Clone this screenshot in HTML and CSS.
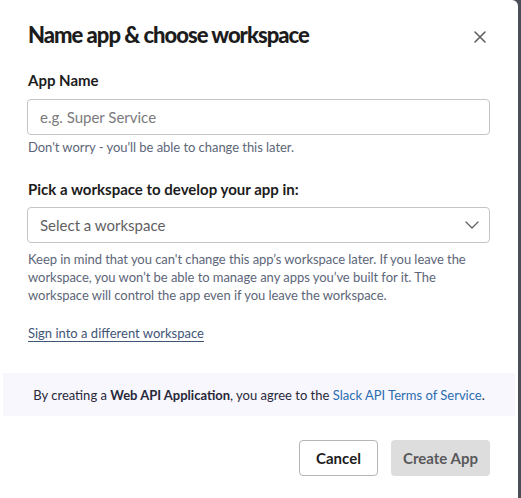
FILE: index.html
```html
<!DOCTYPE html>
<html lang="en">
<head>
<meta charset="utf-8">
<title>Name app &amp; choose workspace</title>
<link rel="stylesheet" href="styles.css">
</head>
<body>
<div class="modal">
  <div class="header">
    <h1 class="title">Name app &amp; choose workspace</h1>
    <button class="close" aria-label="Close">
      <svg width="12" height="12" viewBox="0 0 12 12"><path d="M1 1L11 11M11 1L1 11" stroke="#616061" stroke-width="1.6" stroke-linecap="round"/></svg>
    </button>
  </div>
  <div class="body">
    <label class="label">App Name</label>
    <div class="input placeholder">e.g. Super Service</div>
    <p class="hint">Don't worry - you'll be able to change this later.</p>

    <label class="label label-2">Pick a workspace to develop your app in:</label>
    <div class="input select">
      <span>Select a workspace</span>
      <svg width="14" height="8" viewBox="0 0 14 8"><path d="M1 1L7 7L13 1" fill="none" stroke="#616061" stroke-width="1.3" stroke-linecap="round" stroke-linejoin="round"/></svg>
    </div>
    <p class="hint para">Keep in mind that you can't change this app’s workspace later. If you leave the workspace, you won’t be able to manage any apps you’ve built for it. The workspace will control the app even if you leave the workspace.</p>

    <a class="signin" href="#">Sign into a different workspace</a>
  </div>
  <div class="terms">
    <span>By creating a <b>Web API Application</b>, you agree to the <a href="#">Slack API Terms of Service</a>.</span>
  </div>
  <div class="footer">
    <button class="btn btn-cancel">Cancel</button>
    <button class="btn btn-create">Create App</button>
  </div>
</div>
</body>
</html>
```
FILE: styles.css
```css
html, body {
  margin: 0;
  padding: 0;
  height: 100%;
}
body {
  background: #4b4e56;
  font-family: Lato, "Noto Sans", sans-serif;
  color: #1d1c1d;
  overflow: hidden;
}
.modal {
  width: 518px;
  height: 498px;
  background: #fff;
  border-top-right-radius: 6px;
  box-sizing: border-box;
  display: flex;
  flex-direction: column;
}
.header {
  display: flex;
  justify-content: space-between;
  align-items: center;
  padding: 20px 32px 0 28px;
}
.title {
  margin: 0;
  font-size: 22px;
  font-weight: 900;
  letter-spacing: -1px;
  line-height: 30px;
}
.close {
  border: 0;
  background: none;
  padding: 0;
  width: 12px;
  height: 12px;
  display: flex;
  margin-top: 4px;
}
.body {
  padding: 0 28px 0 27px;
  display: flex;
  flex-direction: column;
}
.label {
  display: block;
  font-size: 15px;
  font-weight: 700;
  line-height: 20px;
  margin-top: 20px;
  margin-bottom: 9px;
  padding-left: 1px;
}
.label-2 {
  margin-top: 23px;
  margin-bottom: 8px;
}
.input {
  height: 36px;
  box-sizing: border-box;
  border: 1px solid #c4c4c6;
  border-radius: 4px;
  padding: 0 12px;
  display: flex;
  align-items: center;
  font-size: 15px;
  color: #7a7a7c;
}
.select {
  justify-content: space-between;
  color: #616061;
  padding-right: 10px;
}
.hint {
  margin: 3px 0 0 1px;
  font-size: 13px;
  line-height: 18px;
  color: #5d6679;
  letter-spacing: -0.05px;
}
.para {
  margin-top: 7px;
}
.signin {
  margin-top: 20px;
  margin-left: 1px;
  align-self: flex-start;
  font-size: 13px;
  line-height: 18px;
  color: #3f5577;
  text-decoration: underline;
  text-underline-offset: 3px;
}
.terms {
  margin: 31px 3px 0 3px;
  height: 43px;
  background: #f8f7fd;
  display: flex;
  align-items: center;
  justify-content: center;
  font-size: 13px;
  color: #27283a;
}
.terms b {
  font-weight: 700;
}
.terms a {
  color: #2a6db0;
  text-decoration: none;
}
.footer {
  display: flex;
  justify-content: flex-end;
  gap: 13px;
  padding: 24px 28px 0 0;
}
.btn {
  height: 36px;
  box-sizing: border-box;
  border-radius: 4px;
  font-family: Lato, "Noto Sans", sans-serif;
  font-size: 15px;
  font-weight: 700;
  padding: 0 12px;
}
.btn-cancel {
  width: 79px;
  background: #fff;
  border: 1px solid #b5b5b7;
  color: #1d1c1d;
}
.btn-create {
  width: 99px;
  background: #dddddd;
  border: 0;
  color: #59595b;
}
```
